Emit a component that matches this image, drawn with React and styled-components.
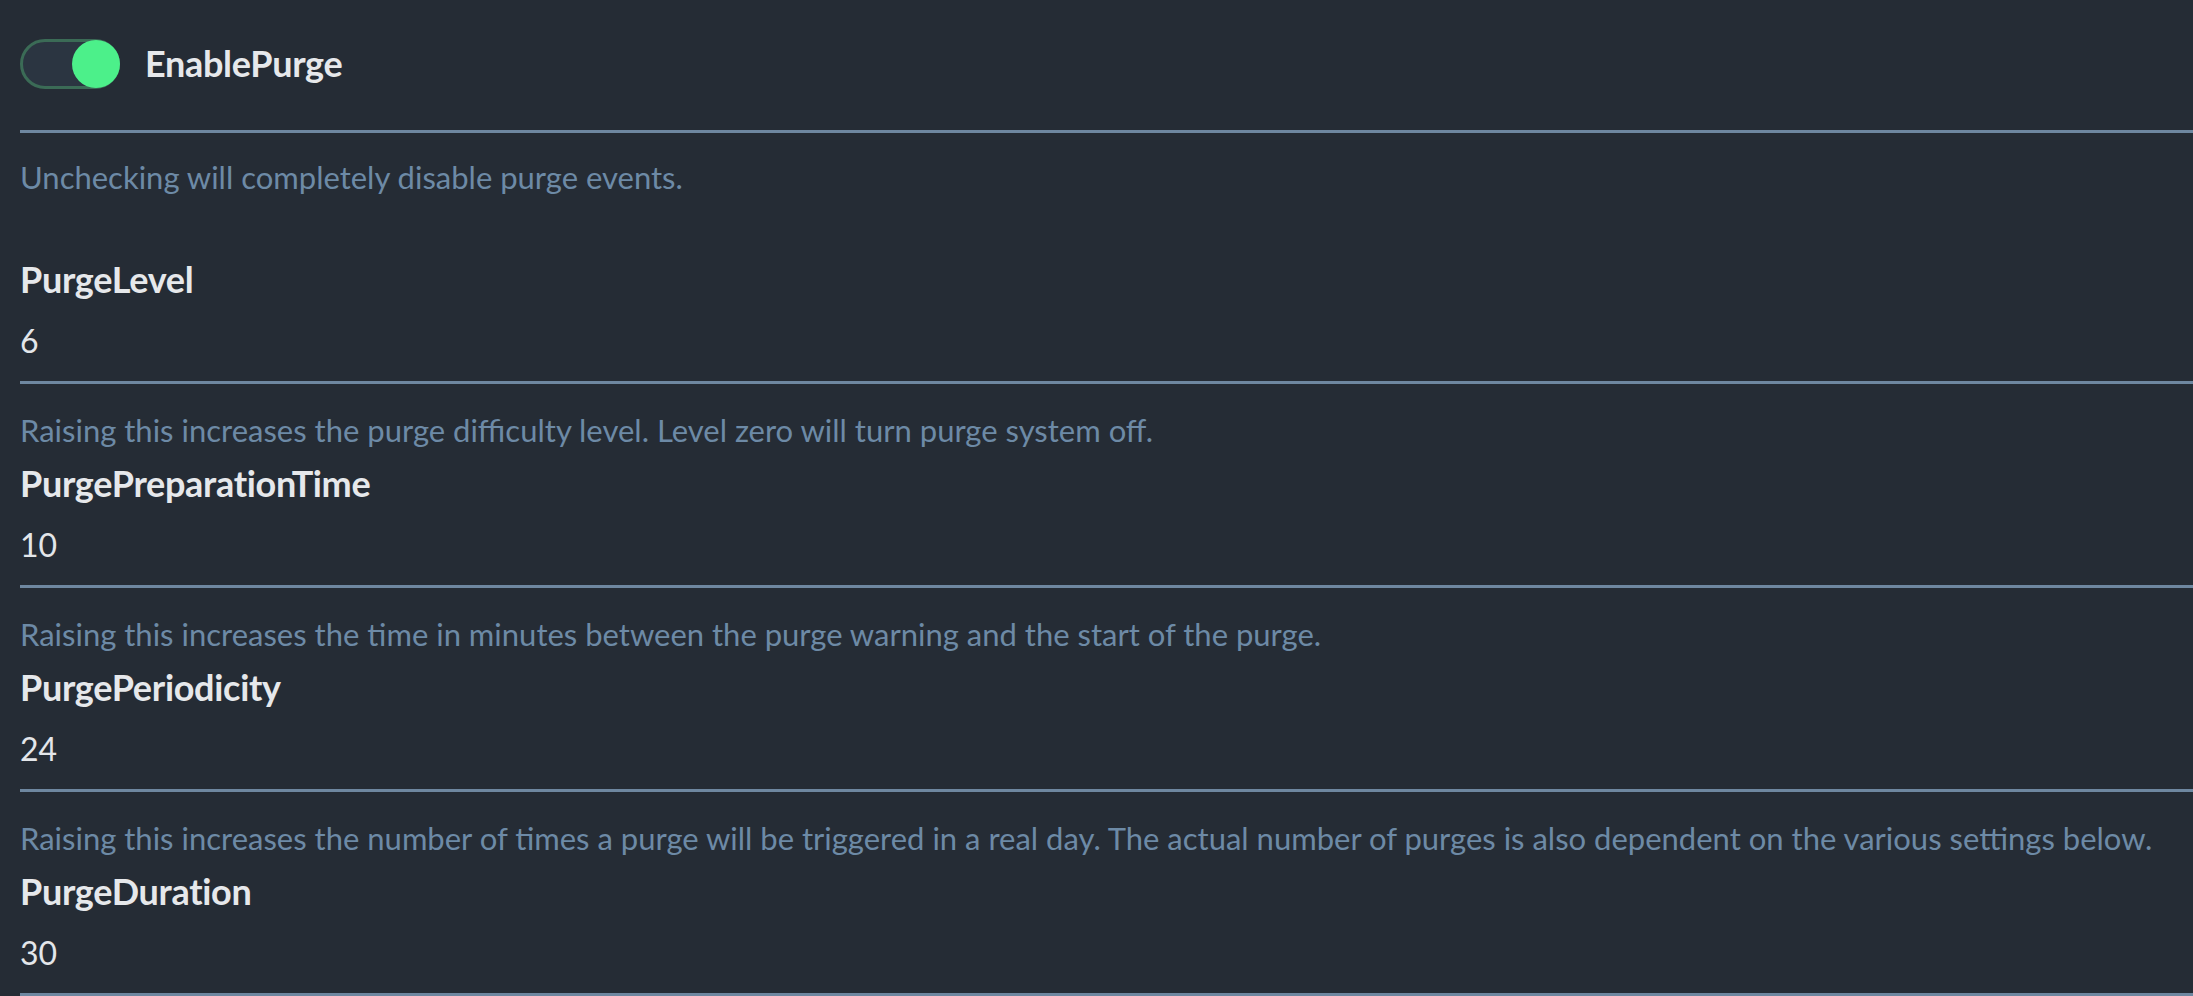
import React, { useState } from 'react';
import styled, { createGlobalStyle } from 'styled-components';

const GlobalStyle = createGlobalStyle`
  html, body {
    margin: 0;
    padding: 0;
    background: #252c35;
  }
  body {
    font-family: Lato, "Noto Sans", sans-serif;
    overflow: hidden;
  }
`;

const Page = styled.div`
  min-height: 100vh;
  background: #252c35;
  padding: 39px 0 0 20px;
  box-sizing: border-box;
`;

const ToggleRow = styled.div`
  display: flex;
  align-items: center;
  gap: 25px;
  height: 50px;
  padding-bottom: 41px;
  border-bottom: 3px solid #6e87a0;
`;

const Track = styled.button`
  display: flex;
  align-items: center;
  justify-content: ${({ on }) => (on ? 'flex-end' : 'flex-start')};
  width: 100px;
  height: 50px;
  padding: 0;
  box-sizing: border-box;
  border: 3px solid ${({ on }) => (on ? '#3b6b56' : '#55606c')};
  border-radius: 25px;
  background: #2b3541;
  cursor: pointer;
`;

const Knob = styled.span`
  width: 48px;
  height: 48px;
  margin: 0 -3px;
  border-radius: 50%;
  background: ${({ on }) => (on ? '#4cf08a' : '#8a96a3')};
`;

const ToggleLabel = styled.span`
  font-size: 36px;
  font-weight: 700;
  color: #e6e8eb;
  letter-spacing: -0.3px;
  margin-top: -2px;
`;

const Desc = styled.div`
  margin-top: ${({ first }) => (first ? '22px' : '24px')};
  height: 45px;
  line-height: 45px;
  font-size: 31px;
  color: #6d8aa6;
  white-space: nowrap;
`;

const Label = styled.div`
  margin-top: ${({ spaced }) => (spaced ? '57px' : '8px')};
  height: 44px;
  line-height: 44px;
  font-size: 36px;
  font-weight: 700;
  color: #e6e8eb;
  letter-spacing: -0.3px;
`;

const Value = styled.div`
  height: ${({ tall }) => (tall ? '80px' : '80px')};
  line-height: 80px;
  font-size: 32px;
  color: #e3e6ea;
  border-bottom: 3px solid #6e87a0;
`;

const fields = [
  {
    name: 'PurgeLevel',
    value: 6,
    desc: 'Raising this increases the purge difficulty level. Level zero will turn purge system off.',
  },
  {
    name: 'PurgePreparationTime',
    value: 10,
    desc: 'Raising this increases the time in minutes between the purge warning and the start of the purge.',
  },
  {
    name: 'PurgePeriodicity',
    value: 24,
    desc: 'Raising this increases the number of times a purge will be triggered in a real day. The actual number of purges is also dependent on the various settings below.',
  },
  {
    name: 'PurgeDuration',
    value: 30,
    desc: '',
  },
];

const App = () => {
  const [enabled, setEnabled] = useState(true);

  return (
    <Page>
      <GlobalStyle />
      <ToggleRow>
        <Track on={enabled ? 1 : 0} onClick={() => setEnabled(!enabled)}>
          <Knob on={enabled ? 1 : 0} />
        </Track>
        <ToggleLabel>EnablePurge</ToggleLabel>
      </ToggleRow>
      <Desc first>Unchecking will completely disable purge events.</Desc>

      {fields.map((f, i) => (
        <div key={f.name}>
          <Label spaced={i === 0}>{f.name}</Label>
          <Value>{f.value}</Value>
          {f.desc && <Desc>{f.desc}</Desc>}
        </div>
      ))}
    </Page>
  );
};

export default App;
